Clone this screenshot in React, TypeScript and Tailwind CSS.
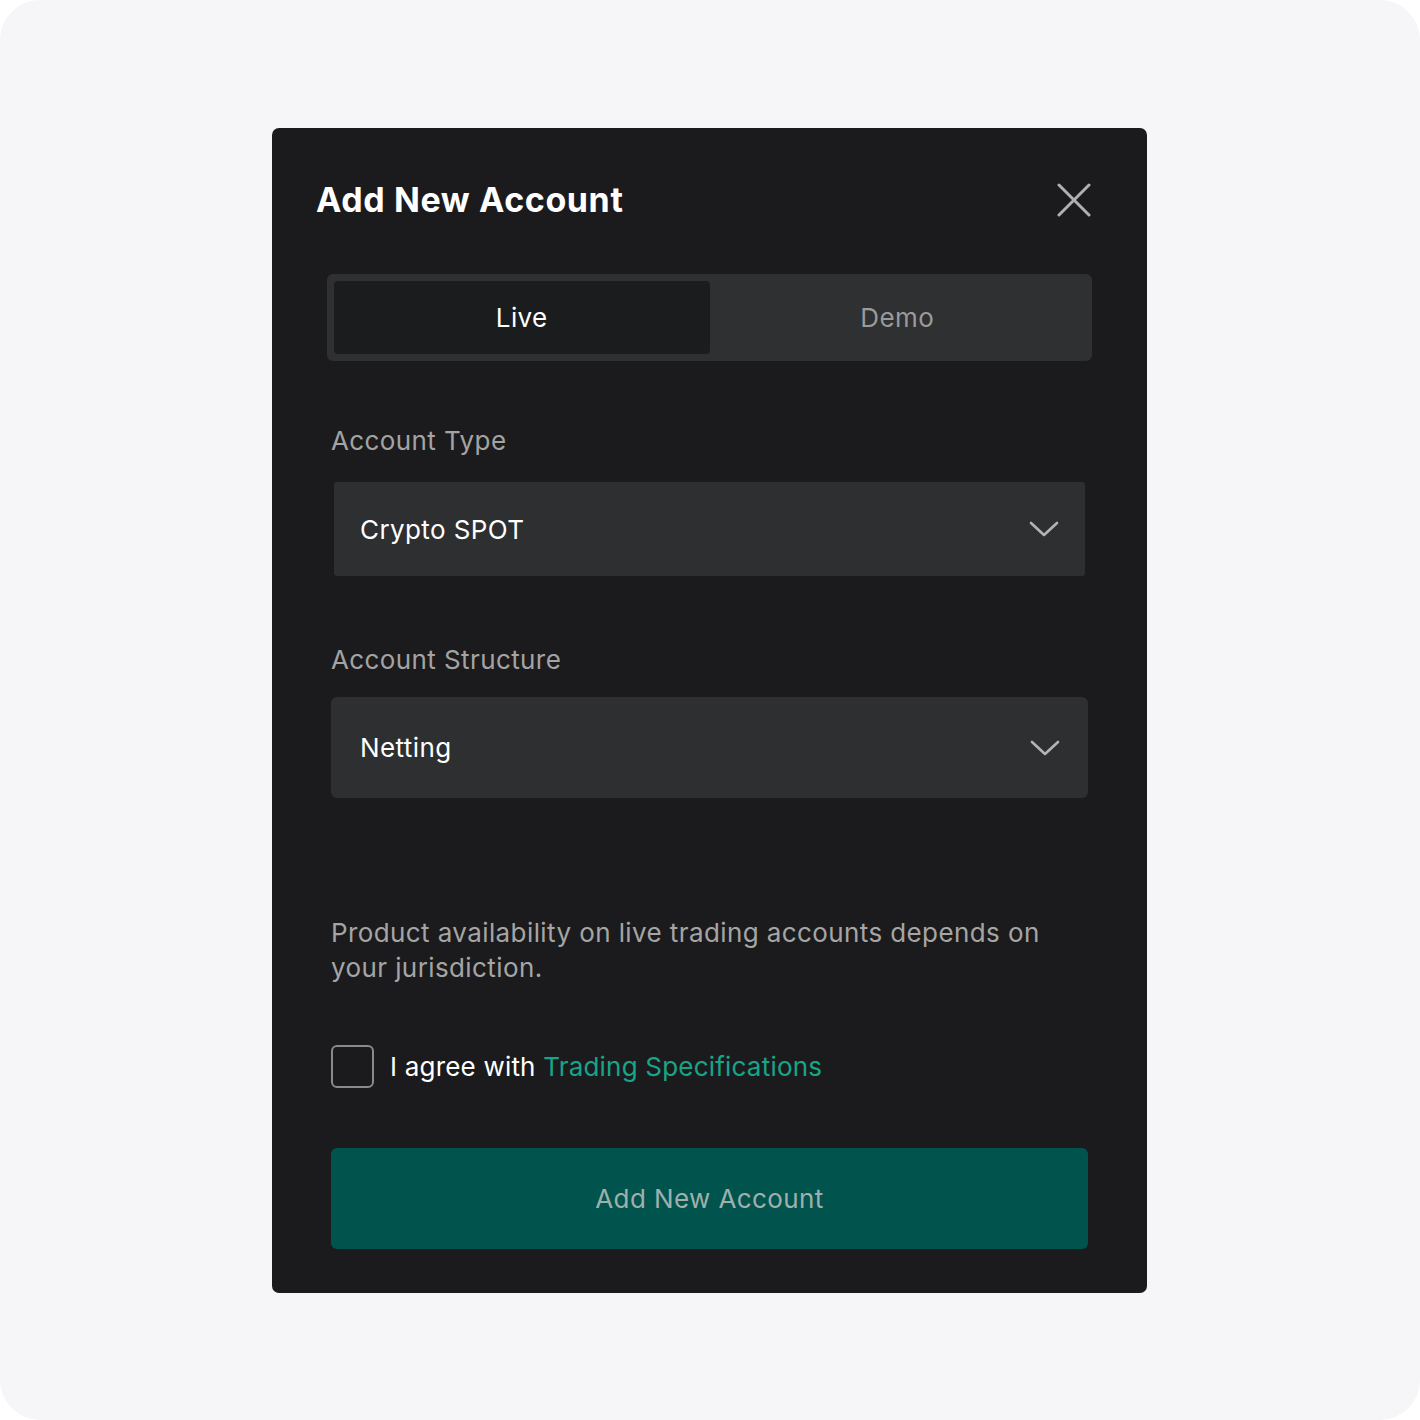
import React from "react";

const Chevron = () => (
  <svg width="30" height="18" viewBox="0 0 30 18" fill="none">
    <path
      d="M2 3 L15 15 L28 3"
      stroke="#b4b4b4"
      strokeWidth="2.6"
      strokeLinecap="round"
      strokeLinejoin="round"
    />
  </svg>
);

export default function App() {
  return (
    <div className="bg-white w-[1420px] h-[1420px]">
      <div
        className="w-full h-full rounded-[40px] bg-[#f6f5f8] pt-[128px] pl-[272px]"
        style={{ fontFamily: "Inter, 'Liberation Sans', sans-serif" }}
      >
        <div className="w-[875px] h-[1165px] bg-[#1b1b1d] rounded-[7px] pt-[50px] tracking-[0.4px]">
          {/* Header */}
          <div className="flex items-center justify-between pl-[44px] pr-[56px]">
            <div className="text-[34px] leading-[44px] font-bold text-white tracking-[0.6px]">
              Add New Account
            </div>
            <svg width="34" height="34" viewBox="0 0 34 34" fill="none">
              <path
                d="M2 2 L32 32 M32 2 L2 32"
                stroke="#b0b0b0"
                strokeWidth="3"
                strokeLinecap="round"
              />
            </svg>
          </div>

          {/* Tabs */}
          <div className="mx-[55px] mt-[52px] h-[87px] bg-[#2e3032] rounded-[6px] p-[7px] flex">
            <div className="flex-1 bg-[#1b1c1e] rounded-[4px] flex items-center justify-center text-white text-[26px]">
              Live
            </div>
            <div className="flex-1 flex items-center justify-center text-[#9a9a9a] text-[26px]">
              Demo
            </div>
          </div>

          <div className="px-[59px]">
            {/* Account type */}
            <div className="mt-[64px] text-[26px] leading-[32px] text-[#a3a3a3]">
              Account Type
            </div>
            <div className="mt-[25px] mx-[3px] h-[94px] bg-[#2d2f31] rounded-[3px] flex items-center justify-between pl-[26px] pr-[26px]">
              <span className="text-white text-[26px]">Crypto SPOT</span>
              <Chevron />
            </div>

            {/* Account structure */}
            <div className="mt-[68px] text-[26px] leading-[32px] text-[#a3a3a3]">
              Account Structure
            </div>
            <div className="mt-[21px] h-[101px] bg-[#2d2f31] rounded-[6px] flex items-center justify-between pl-[29px] pr-[28px]">
              <span className="text-white text-[26px]">Netting</span>
              <Chevron />
            </div>

            {/* Notice */}
            <p className="mt-[117px] text-[26px] leading-[35px] text-[#a5a5a5]">
              Product availability on live trading accounts depends on
              <br />
              your jurisdiction.
            </p>

            {/* Agreement */}
            <div className="mt-[60px] flex items-center gap-[16px]">
              <div className="w-[43px] h-[43px] rounded-[6px] border-2 border-[#8a8a8a]" />
              <span className="text-[26px] text-white tracking-[0.2px]">
                I agree with{" "}
                <span className="text-[#17a589]">Trading Specifications</span>
              </span>
            </div>

            {/* Submit */}
            <button className="mt-[60px] w-full h-[101px] bg-[#01544e] rounded-[6px] text-[26px] text-[#9fb0ac] tracking-[0.4px]">
              Add New Account
            </button>
          </div>
        </div>
      </div>
    </div>
  );
}
